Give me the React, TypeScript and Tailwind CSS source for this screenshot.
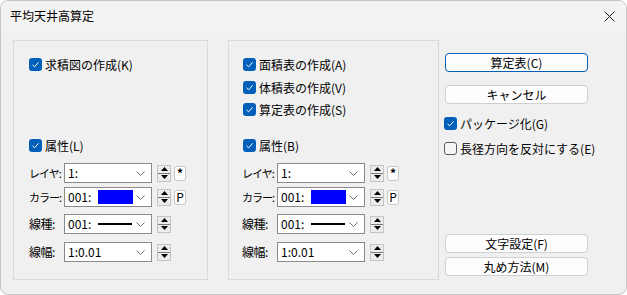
import type { ReactNode } from "react";

const FONT = { fontFamily: '"Noto Sans CJK JP", "Noto Sans", sans-serif' };

function Check({ checked = true }: { checked?: boolean }) {
  return checked ? (
    <span className="flex h-[13px] w-[13px] shrink-0 items-center justify-center rounded-[3px] bg-[#005fb8]">
      <svg width="9" height="9" viewBox="0 0 9 9">
        <path d="M1.5 4.8 L3.6 6.8 L7.6 2.3" fill="none" stroke="#fff" strokeWidth="1" />
      </svg>
    </span>
  ) : (
    <span className="h-[13px] w-[13px] shrink-0 rounded-[3px] border border-[#5a5a5a] bg-[#f5f5f5]" />
  );
}

function CheckRow({ label, checked = true }: { label: string; checked?: boolean }) {
  return (
    <div className="flex h-[13px] items-center gap-[3px] whitespace-nowrap text-[12px] leading-none text-black">
      <Check checked={checked} />
      <span>{label}</span>
    </div>
  );
}

function Chevron() {
  return (
    <svg width="9" height="5" viewBox="0 0 9 5" className="ml-auto mr-[6px] shrink-0">
      <path d="M0.5 0.5 L4.5 4.5 L8.5 0.5" fill="none" stroke="#6e6e6e" strokeWidth="1" />
    </svg>
  );
}

function Spin() {
  return (
    <div className="ml-[5px] flex h-[17px] w-[14px] shrink-0 flex-col border border-[#c4c4c4] bg-[#ececec]">
      <div className="flex flex-1 items-center justify-center border-b border-[#7a7a7a]">
        <svg width="7" height="4" viewBox="0 0 7 4">
          <path d="M0 4 L3.5 0 L7 4 Z" fill="#000" />
        </svg>
      </div>
      <div className="flex flex-1 items-center justify-center">
        <svg width="7" height="4" viewBox="0 0 7 4">
          <path d="M0 0 L7 0 L3.5 4 Z" fill="#000" />
        </svg>
      </div>
    </div>
  );
}

function Combo({ children }: { children: ReactNode }) {
  return (
    <div className="flex h-[20px] w-[88px] shrink-0 items-center whitespace-nowrap border border-[#8a8a8a] bg-white pl-[3px] text-[12px] leading-none">
      {children}
      <Chevron />
    </div>
  );
}

function Mini({ label, bold = false }: { label: string; bold?: boolean }) {
  return (
    <div
      className={`ml-[3px] flex h-[15px] w-[12px] items-center justify-center rounded-[3px] border border-[#c8c8c8] bg-white text-[12px] leading-none ${
        bold ? "font-bold" : "font-normal"
      }`}
    >
      {label}
    </div>
  );
}

function Label({ text, narrow = false }: { text: string; narrow?: boolean }) {
  return (
    <span
      className={`w-[35px] shrink-0 whitespace-nowrap leading-none ${
        narrow ? "text-[11px] tracking-[-1px]" : "text-[12px] tracking-[-0.5px]"
      }`}
    >
      {text}
    </span>
  );
}

function AttrRows() {
  return (
    <div className="flex flex-col">
      <div className="flex h-[20px] items-center">
        <Label text="レイヤ:" narrow />
        <Combo>
          <span>1:</span>
        </Combo>
        <Spin />
        <Mini label="*" bold />
      </div>
      <div className="mt-[4px] flex h-[20px] items-center">
        <Label text="カラー:" narrow />
        <Combo>
          <span className="w-[30px]">001:</span>
          <span className="h-[14px] w-[35px] bg-[#0000ff]" />
        </Combo>
        <Spin />
        <Mini label="P" />
      </div>
      <div className="mt-[7px] flex h-[20px] items-center">
        <Label text="線種:" />
        <Combo>
          <span className="w-[30px]">001:</span>
          <span className="h-[2px] w-[34px] bg-black" />
        </Combo>
        <Spin />
      </div>
      <div className="mt-[8px] flex h-[20px] items-center">
        <Label text="線幅:" />
        <Combo>
          <span>1:0.01</span>
        </Combo>
        <Spin />
      </div>
    </div>
  );
}

function Btn({ label, primary = false }: { label: string; primary?: boolean }) {
  return (
    <div
      className={`flex h-[19px] w-[143px] items-center justify-center rounded-[4px] border bg-[#fdfdfd] text-[12px] leading-none ${
        primary ? "border-[#005fb8]" : "border-[#d0d0d0]"
      }`}
    >
      {label}
    </div>
  );
}

export default function App() {
  return (
    <div className="h-[295px] w-[627px] bg-white" style={FONT}>
      <div className="flex h-[295px] w-[627px] flex-col overflow-hidden rounded-[8px] border border-[#c6c6c6] bg-[#f0f0f0] text-black">
        <div className="flex h-[30px] shrink-0 items-center bg-[#f3f3f3] pl-[9px] pr-[11px]">
          <span className="text-[12px] leading-none">平均天井高算定</span>
          <svg width="11" height="11" viewBox="0 0 11 11" className="ml-auto">
            <path d="M0.5 0.5 L10.5 10.5 M10.5 0.5 L0.5 10.5" stroke="#1a1a1a" strokeWidth="1" />
          </svg>
        </div>

        <div className="flex pl-[12px] pt-[9px]">
          <div className="flex h-[240px] w-[195px] flex-col border border-[#dadada] pl-[15px] pt-[17px]">
            <CheckRow label="求積図の作成(K)" />
            <div className="mt-[68px]">
              <CheckRow label="属性(L)" />
            </div>
            <div className="mt-[11px]">
              <AttrRows />
            </div>
          </div>

          <div className="ml-[20px] flex h-[240px] w-[211px] flex-col border border-[#dadada] pl-[14px] pt-[17px]">
            <CheckRow label="面積表の作成(A)" />
            <div className="mt-[10px]">
              <CheckRow label="体積表の作成(V)" />
            </div>
            <div className="mt-[9px]">
              <CheckRow label="算定表の作成(S)" />
            </div>
            <div className="mt-[23px]">
              <CheckRow label="属性(B)" />
            </div>
            <div className="mt-[11px] -ml-[1px]">
              <AttrRows />
            </div>
          </div>

          <div className="ml-[6px] flex flex-col pt-[13px]">
            <Btn label="算定表(C)" primary />
            <div className="mt-[13px]">
              <Btn label="キャンセル" />
            </div>
            <div className="mt-[13px] -ml-[1px]">
              <CheckRow label="パッケージ化(G)" />
            </div>
            <div className="mt-[12px] -ml-[1px]">
              <CheckRow label="長径方向を反対にする(E)" checked={false} />
            </div>
            <div className="mt-[79px]">
              <Btn label="文字設定(F)" />
            </div>
            <div className="mt-[4px]">
              <Btn label="丸め方法(M)" />
            </div>
          </div>
        </div>
      </div>
    </div>
  );
}
